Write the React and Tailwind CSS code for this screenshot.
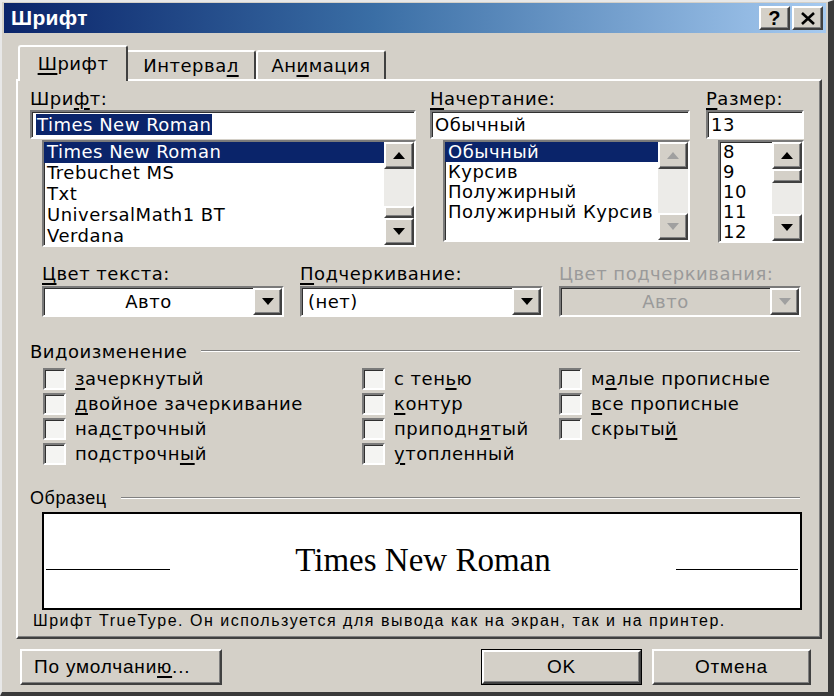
import React from "react";

const UI = { fontFamily: '"DejaVu Sans", Verdana, sans-serif' };
const NARROW = { fontFamily: '"Liberation Sans", Arial, sans-serif' };

const U = ({ children }) => <span className="underline underline-offset-[3px] decoration-[1.5px]">{children}</span>;

const raised =
  "bg-[#d4d0c8] border-2 border-t-white border-l-white border-b-[#404040] border-r-[#404040] shadow-[inset_-1px_-1px_0_#808080]";
const sunken =
  "border-2 border-t-[#7a7a7a] border-l-[#7a7a7a] border-b-white border-r-white shadow-[inset_1px_1px_0_#303030]";

const Tri = ({ dir = "down", color = "#000" }) => (
  <svg width="12" height="7" viewBox="0 0 12 7">
    {dir === "down" ? (
      <polygon points="0,0 12,0 6,7" fill={color} />
    ) : (
      <polygon points="0,7 12,7 6,0" fill={color} />
    )}
  </svg>
);

const ArrowBtn = ({ dir, disabled }) => (
  <div className={`${raised} w-[30px] h-[27px] flex items-center justify-center shrink-0`}>
    <Tri dir={dir} color={disabled ? "#a0a0a0" : "#000"} />
  </div>
);

const Scroll = ({ thumb, disabled }) => (
  <div className="w-[30px] h-full flex flex-col bg-[#ecebe8] shrink-0">
    <ArrowBtn dir="up" disabled={disabled} />
    <div className="flex-1 flex flex-col">
      {thumb === "top" && <div className={`${raised} h-[14px]`} />}
      <div className="flex-1" />
      {thumb === "bottom" && <div className={`${raised} h-[12px]`} />}
    </div>
    <ArrowBtn dir="down" disabled={disabled} />
  </div>
);

const ListBox = ({ items, selected, className, thumb, disabled, row }) => (
  <div className={`${sunken} bg-white flex ${className}`}>
    <div className="flex-1 overflow-hidden">
      {items.map((it, i) => (
        <div
          key={i}
          className={`${row} pl-[3px] whitespace-nowrap ${
            i === selected ? "bg-[#0a246a] text-white" : "text-black"
          }`}
        >
          {it}
        </div>
      ))}
    </div>
    <Scroll thumb={thumb} disabled={disabled} />
  </div>
);

const Combo = ({ value, center, disabled }) => (
  <div className={`${sunken} ${disabled ? "bg-[#d4d0c8]" : "bg-white"} h-[31px] flex items-center`}>
    <div
      className={`flex-1 ${center ? "text-center" : "pl-[6px]"} ${disabled ? "text-[#9a9a9a]" : "text-black"}`}
    >
      {value}
    </div>
    <div className={`${raised} w-[29px] h-[27px] flex items-center justify-center`}>
      <Tri dir="down" color={disabled ? "#a0a0a0" : "#000"} />
    </div>
  </div>
);

const Check = ({ children }) => (
  <div className="flex items-center h-[25px]">
    <div className={`${sunken} w-[23px] h-[22px] bg-[#f4f4f2] shrink-0`} />
    <div className="ml-[9px] whitespace-nowrap">{children}</div>
  </div>
);

export default function App() {
  return (
    <div
      className="w-[834px] h-[696px] bg-[#d4d0c8] text-[18px] tracking-[0.5px] text-black flex flex-col border-t-2 border-l-2 border-t-[#e8e8e8] border-l-[#e8e8e8] border-r-[6px] border-b-4 border-r-[#3a3a3a] border-b-[#3a3a3a] overflow-hidden"
      style={UI}
    >
      {/* title bar */}
      <div className="mx-[2px] mt-[1px] h-[30px] shrink-0 flex items-center bg-[linear-gradient(90deg,#0a246a,#3a6ea5_45%,#a6caf0)]">
        <div className="ml-[7px] text-white font-bold text-[21px] tracking-[0.3px]" style={NARROW}>
          Шрифт
        </div>
        <div className="flex-1" />
        <div className={`${raised} w-[31px] h-[24px] flex items-center justify-center font-bold text-[20px] leading-none`} style={NARROW}>
          ?
        </div>
        <div className={`${raised} w-[31px] h-[24px] ml-[2px] mr-[3px] flex items-center justify-center`}>
          <svg width="14" height="13" viewBox="0 0 14 13">
            <path d="M1 1 L13 12 M13 1 L1 12" stroke="#000" strokeWidth="2.6" />
          </svg>
        </div>
      </div>

      <div className="pl-[14px] pr-[8px] pt-[12px] flex flex-col">
        {/* tabs */}
        <div className="flex items-end h-[36px] relative z-10">
          <div className="ml-[2px] w-[110px] h-[36px] bg-[#d4d0c8] border-t-2 border-l-2 border-white border-r-2 border-r-[#404040] rounded-t-[3px] flex items-center justify-center pb-[2px]">
            <span><U>Ш</U>рифт</span>
          </div>
          <div className="w-[128px] h-[29px] bg-[#d4d0c8] border-t-2 border-white border-r-2 border-r-[#404040] rounded-tr-[3px] flex items-center justify-center mb-[2px]">
            <span>Интерва<U>л</U></span>
          </div>
          <div className="w-[130px] h-[29px] bg-[#d4d0c8] border-t-2 border-l-2 border-white border-r-2 border-r-[#404040] rounded-t-[3px] flex items-center justify-center mb-[2px]">
            <span>Ан<U>и</U>мация</span>
          </div>
        </div>

        {/* panel */}
        <div className="-mt-[2px] h-[560px] w-[806px] border-t-2 border-l-2 border-white border-r-2 border-b-2 border-r-[#404040] border-b-[#404040] shadow-[inset_-1px_-1px_0_#808080] flex flex-col">
          {/* row 1 */}
          <div className="flex mt-[6px]">
            <div className="ml-[12px] w-[386px] flex flex-col">
              <div className="h-[23px] leading-[23px]">Шри<U>ф</U>т:</div>
              <div className={`${sunken} bg-white h-[29px] flex items-center pl-[4px]`}>
                <span className="bg-[#0a246a] text-white leading-[21px] px-[1px]">Times New Roman</span>
              </div>
              <ListBox
                className="ml-[12px] mt-[1px] h-[107px]"
                row="h-[21px] leading-[20px]"
                items={["Times New Roman", "Trebuchet MS", "Txt", "UniversalMath1 BT", "Verdana"]}
                selected={0}
                thumb="bottom"
              />
            </div>
            <div className="ml-[14px] w-[260px] flex flex-col">
              <div className="h-[23px] leading-[23px]"><U>Н</U>ачертание:</div>
              <div className={`${sunken} bg-white h-[29px] flex items-center pl-[3px]`}>Обычный</div>
              <ListBox
                className="ml-[13px] mt-[1px] h-[102px]"
                row="h-[20px] leading-[20px]"
                items={["Обычный", "Курсив", "Полужирный", "Полужирный Курсив"]}
                selected={0}
                disabled
              />
            </div>
            <div className="ml-[16px] w-[98px] flex flex-col">
              <div className="h-[23px] leading-[23px]"><U>Р</U>азмер:</div>
              <div className={`${sunken} bg-white h-[29px] flex items-center pl-[3px]`}>13</div>
              <ListBox
                className="ml-[12px] mt-[1px] h-[103px]"
                row="h-[20px] leading-[20px]"
                items={["8", "9", "10", "11", "12"]}
                selected={-1}
                thumb="top"
              />
            </div>
          </div>

          {/* row 2 */}
          <div className="flex mt-[15px] ml-[24px] gap-[16px]">
            <div className="w-[242px]">
              <div className="h-[24px] leading-[24px]"><U>Ц</U>вет текста:</div>
              <Combo value="Авто" center />
            </div>
            <div className="w-[243px]">
              <div className="h-[24px] leading-[24px]"><U>П</U>одчеркивание:</div>
              <Combo value="(нет)" />
            </div>
            <div className="w-[242px]">
              <div className="h-[24px] leading-[24px] text-[#9a9a9a] whitespace-nowrap">Цвет подчеркивания:</div>
              <Combo value="Авто" center disabled />
            </div>
          </div>

          {/* Видоизменение */}
          <div className="flex items-center mt-[23px] ml-[12px] mr-[20px] h-[22px]">
            <span>Видоизменение</span>
            <div className="flex-1 ml-[14px] h-[2px] border-t border-t-[#808080] border-b border-b-white" />
          </div>
          <div className="flex mt-[4px] ml-[25px]">
            <div className="w-[319px]">
              <Check><U>з</U>ачеркнутый</Check>
              <Check><U>д</U>войное зачеркивание</Check>
              <Check>над<U>с</U>трочный</Check>
              <Check>подстрочн<U>ы</U>й</Check>
            </div>
            <div className="w-[197px]">
              <Check>с тен<U>ь</U>ю</Check>
              <Check><U>к</U>онтур</Check>
              <Check>приподн<U>я</U>тый</Check>
              <Check><U>у</U>топленный</Check>
            </div>
            <div>
              <Check>м<U>а</U>лые прописные</Check>
              <Check><U>в</U>се прописные</Check>
              <Check>скрыты<U>й</U></Check>
            </div>
          </div>

          {/* Образец */}
          <div className="flex items-center mt-[22px] ml-[12px] mr-[20px] h-[20px] tracking-[0.6px]" style={NARROW}>
            <span className="text-[18px]">Образец</span>
            <div className="flex-1 ml-[14px] h-[2px] border-t border-t-[#808080] border-b border-b-white" />
          </div>
          <div className="ml-[24px] mt-[4px] w-[760px] h-[98px] bg-white border-2 border-black flex items-center">
            <div className="w-[124px] h-[1px] bg-black mt-[16px] ml-[2px]" />
            <div className="flex-1 text-center text-[33px] tracking-[0px]" style={{ fontFamily: '"Liberation Serif", "Times New Roman", serif' }}>
              Times New Roman
            </div>
            <div className="w-[122px] h-[1px] bg-black mt-[16px] mr-[2px]" />
          </div>
          <div className="ml-[15px] mt-[0px] text-[16px] tracking-[1.5px] leading-[22px] whitespace-nowrap" style={NARROW}>
            Шрифт TrueType. Он используется для вывода как на экран, так и на принтер.
          </div>
        </div>

        {/* buttons */}
        <div className="flex mt-[10px] text-[19px] tracking-[0.8px]" style={NARROW}>
          <div className={`${raised} ml-[4px] w-[202px] h-[36px] flex items-center pl-[12px]`}>
            По умолчани<U>ю</U>...
          </div>
          <div className="ml-[259px] w-[161px] h-[36px] border border-black">
            <div className={`${raised} w-full h-full flex items-center justify-center`}>OK</div>
          </div>
          <div className={`${raised} ml-[10px] w-[159px] h-[36px] flex items-center justify-center`}>
            Отмена
          </div>
        </div>
      </div>
    </div>
  );
}
